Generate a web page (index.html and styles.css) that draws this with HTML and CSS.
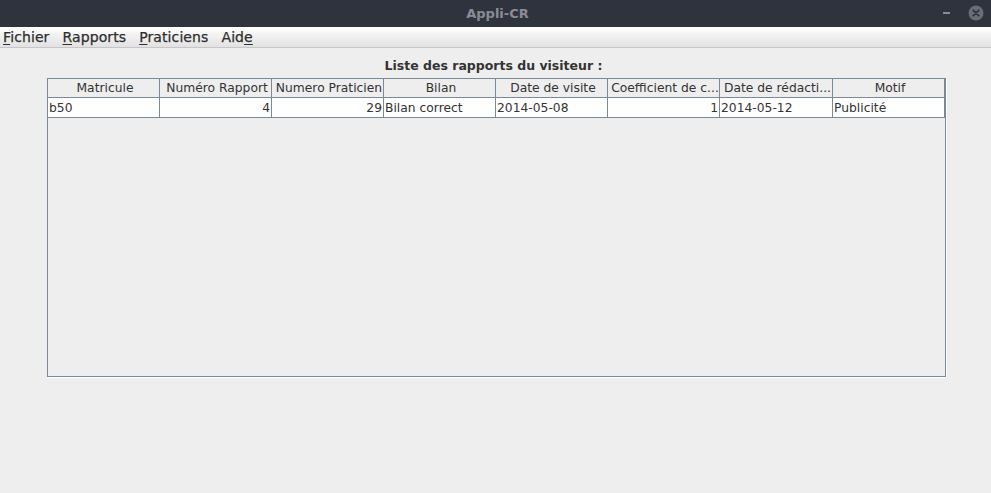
FILE: index.html
```html
<!DOCTYPE html>
<html>
<head>
<meta charset="utf-8">
<link rel="stylesheet" href="styles.css">
</head>
<body>
<div class="window">
  <div class="titlebar">
    <span class="title">Appli-CR</span>
    <div class="controls">
      <span class="minimize"></span>
      <span class="close">
        <svg width="16" height="16" viewBox="0 0 16 16"><circle cx="8" cy="8" r="7.5" fill="#6a6d74"/><path d="M5.3 5.3 L10.7 10.7 M10.7 5.3 L5.3 10.7" stroke="#2f333d" stroke-width="1.8" stroke-linecap="round"/></svg>
      </span>
    </div>
  </div>
  <div class="menubar">
    <span class="menu"><u>F</u>ichier</span>
    <span class="menu"><u>R</u>apports</span>
    <span class="menu"><u>P</u>raticiens</span>
    <span class="menu">Aid<u>e</u></span>
  </div>
  <div class="content">
    <div class="heading">Liste des rapports du visiteur :</div>
    <div class="pane">
      <div class="grid header">
        <div class="cell">Matricule</div>
        <div class="cell">Numéro Rapport</div>
        <div class="cell">Numero Praticien</div>
        <div class="cell">Bilan</div>
        <div class="cell">Date de visite</div>
        <div class="cell">Coefficient de c...</div>
        <div class="cell">Date de rédacti...</div>
        <div class="cell">Motif</div>
      </div>
      <div class="grid row">
        <div class="cell">b50</div>
        <div class="cell num">4</div>
        <div class="cell num">29</div>
        <div class="cell">Bilan correct</div>
        <div class="cell">2014-05-08</div>
        <div class="cell num">1</div>
        <div class="cell">2014-05-12</div>
        <div class="cell">Publicité</div>
      </div>
    </div>
  </div>
</div>
</body>
</html>
```
FILE: styles.css
```css
html, body {
  margin: 0;
  padding: 0;
  background: #eeeeee;
}
.window {
  width: 991px;
  height: 493px;
  display: flex;
  flex-direction: column;
  background: #eeeeee;
  overflow: hidden;
}
.titlebar {
  height: 27px;
  background: #2f333d;
  display: flex;
  align-items: center;
  justify-content: center;
  position: relative;
}
.title {
  font-family: "DejaVu Sans", sans-serif;
  font-weight: bold;
  font-size: 13px;
  color: #8a8d93;
  margin-left: 4px;
}
.controls {
  position: absolute;
  right: 7px;
  top: 5px;
  display: flex;
  align-items: center;
  gap: 18px;
}
.minimize {
  display: block;
  width: 7px;
  height: 2px;
  background: #8a8d93;
  margin-top: -1px;
}
.close {
  display: block;
  width: 16px;
  height: 16px;
}
.close svg { display: block; }
.menubar {
  height: 20px;
  background: linear-gradient(#ffffff, #f2f2f2 40%, #e2e2e2);
  border-bottom: 1px solid #c6c6c6;
  display: flex;
  align-items: center;
  padding-left: 3px;
  gap: 13px;
}
.menu {
  font-family: "DejaVu Sans", sans-serif;
  font-size: 14px;
  letter-spacing: 0.1px;
  color: #2e2e2e;
  line-height: 16px;
  -webkit-text-stroke: 0.25px #2e2e2e;
}
.menu u {
  text-decoration-thickness: 1px;
  text-underline-offset: 2px;
}
.content {
  display: flex;
  flex-direction: column;
  padding-left: 47px;
}
.heading {
  width: 899px;
  text-align: center;
  font-family: "DejaVu Sans", sans-serif;
  font-weight: bold;
  font-size: 12.5px;
  color: #333333;
  line-height: 16px;
  margin-top: 10px;
  margin-bottom: 4px;
  margin-left: -3px;
}
.pane {
  width: 897px;
  height: 297px;
  border: 1px solid #7a8a99;
  box-shadow: 1px 1px 0 #ffffff;
  background: #eeeeee;
}
.grid {
  display: grid;
  grid-template-columns: 112px 112px 112px 112px 112px 112px 113px 112px;
}
.cell {
  font-family: "DejaVu Sans", sans-serif;
  font-size: 12.3px;
  color: #333333;
  border-right: 1px solid #7a8a99;
  white-space: nowrap;
  overflow: hidden;
  padding: 0 1px;
}
.header .cell {
  height: 18px;
  line-height: 19px;
  text-align: center;
  background: #eeeeee;
  border-bottom: 1px solid #7a8a99;
  padding: 0 0 0 3px;
}
.row .cell {
  height: 19px;
  line-height: 20px;
  background: #ffffff;
  border-bottom: 1px solid #7a8a99;
}
.row .num {
  text-align: right;
}
```
